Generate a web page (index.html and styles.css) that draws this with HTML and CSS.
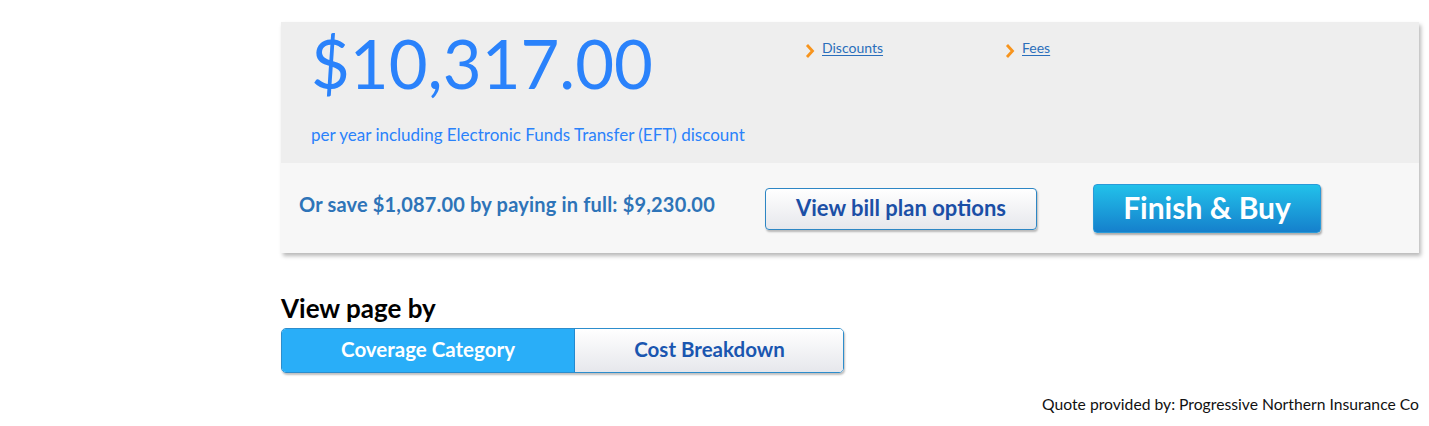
FILE: index.html
```html
<!DOCTYPE html>
<html lang="en">
<head>
<meta charset="utf-8">
<title>Quote</title>
<link rel="stylesheet" href="styles.css">
</head>
<body>
<main class="page">
  <section class="card">
    <div class="card-top">
      <div class="price-col">
        <div class="price">$10,317.00</div>
        <div class="price-note">per year including Electronic Funds Transfer (EFT) discount</div>
      </div>
      <div class="links">
        <a class="link link-discounts" href="#"><span class="chev">
          <svg width="10" height="16" viewBox="0 0 10 16"><path d="M2 3 L7.5 9 L2 15" fill="none" stroke="#f7941d" stroke-width="2.8" stroke-linejoin="miter"/></svg>
        </span><span class="link-text">Discounts</span></a>
        <a class="link link-fees" href="#"><span class="chev">
          <svg width="10" height="16" viewBox="0 0 10 16"><path d="M2 3 L7.5 9 L2 15" fill="none" stroke="#f7941d" stroke-width="2.8" stroke-linejoin="miter"/></svg>
        </span><span class="link-text">Fees</span></a>
      </div>
    </div>
    <div class="card-bottom">
      <div class="save">Or save $1,087.00 by paying in full: $9,230.00</div>
      <button class="btn btn-plan" type="button">View bill plan options</button>
      <button class="btn btn-buy" type="button">Finish &amp; Buy</button>
    </div>
  </section>

  <section class="view-by">
    <h2 class="view-title">View page by</h2>
    <div class="toggle">
      <button class="toggle-btn active" type="button">Coverage Category</button>
      <button class="toggle-btn" type="button">Cost Breakdown</button>
    </div>
  </section>

  <footer class="provider">Quote provided by: Progressive Northern Insurance Co</footer>
</main>
</body>
</html>
```

FILE: styles.css
```css
* { box-sizing: border-box; }
html, body { margin: 0; padding: 0; background: #ffffff; }
body {
  font-family: Lato, "Open Sans", "Liberation Sans", sans-serif;
  color: #111;
}
.page {
  padding: 22px 10px 0 281px;
  width: 1429px;
}
.card {
  width: 1138px;
  background: #f7f7f7;
  box-shadow: 2px 3px 4px rgba(0,0,0,0.28);
}
.card-top {
  height: 141px;
  background: #eeeeee;
  display: flex;
  padding-left: 30px;
}
.price-col {
  width: 494px;
  display: flex;
  flex-direction: column;
}
.price {
  font-size: 67px;
  line-height: 66px;
  margin-top: 8px;
  color: #2a82fb;
}
.price-note {
  margin-top: 29px;
  font-size: 17px;
  line-height: 20px;
  color: #2a82fb;
}
.links {
  display: flex;
  padding-top: 17px;
}
.link {
  display: flex;
  align-items: flex-start;
  text-decoration: none;
  font-size: 14px;
  line-height: 18px;
}
.link-discounts { width: 200px; }
.chev { display: block; margin-top: 3px; margin-right: 7px; }
.link-text {
  color: #2a6ebb;
  text-decoration: underline;
  text-underline-offset: 2px;
}
.card-bottom {
  height: 90px;
  display: flex;
  align-items: center;
  padding-left: 18px;
}
.save {
  width: 466px;
  font-size: 20px;
  letter-spacing: 0.18px;
  font-weight: 700;
  color: #2e74b8;
  margin-top: -8px;
}
.btn {
  font-family: inherit;
  font-weight: 700;
  cursor: pointer;
}
.btn-plan {
  width: 272px;
  height: 42px;
  margin-top: 2px;
  padding-bottom: 4px;
  border: 1px solid #2d86c4;
  border-radius: 4px;
  background: linear-gradient(#ffffff, #e6e7ec);
  color: #1b4fa6;
  font-size: 22px;
  box-shadow: 1px 2px 2px rgba(0,0,0,0.25);
}
.btn-buy {
  margin-left: 56px;
  width: 228px;
  height: 49px;
  padding-bottom: 3px;
  border: 1px solid #2a9ad8;
  border-radius: 4px;
  background: linear-gradient(#22c1ea, #1580cc);
  color: #ffffff;
  font-size: 30px;
  box-shadow: 1px 2px 2px rgba(0,0,0,0.3);
}
.view-by { margin-top: 40px; }
.view-title {
  margin: 0;
  font-size: 26px;
  line-height: 30px;
  font-weight: 700;
  color: #000;
}
.toggle {
  margin-top: 5px;
  display: flex;
  width: 563px;
  height: 45px;
  border: 1px solid #2d8dcc;
  border-radius: 5px;
  overflow: hidden;
  box-shadow: 1px 2px 2px rgba(0,0,0,0.25);
}
.toggle-btn {
  border: 0;
  font-family: inherit;
  font-size: 20.5px;
  font-weight: 700;
  background: linear-gradient(#ffffff, #e6e7ec);
  color: #1a56b0;
  flex: 0 0 269px;
  padding-bottom: 4px;
}
.toggle-btn.active {
  flex: 0 0 293px;
  background: #29aef8;
  color: #ffffff;
  border-right: 1px solid #2389cf;
}
.provider {
  width: 1138px;
  text-align: right;
  margin-top: 22px;
  font-size: 15.7px;
  color: #111;
}
```
